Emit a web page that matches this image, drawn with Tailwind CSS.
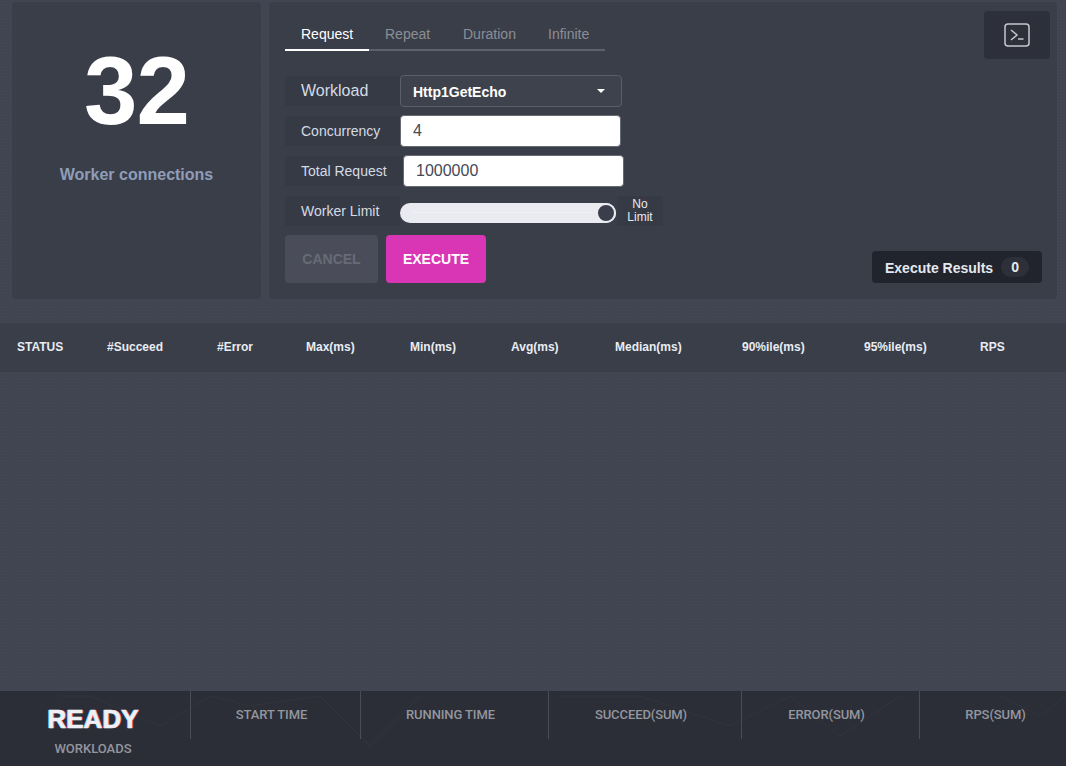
<!DOCTYPE html>
<html lang="en">
<head>
  <meta charset="UTF-8">
  <title>Workloads</title>
  <script src="https://cdn.jsdelivr.net/npm/@tailwindcss/browser@4"></script>
</head>
<body class="bg-[#404551] text-white font-['Liberation_Sans',Arial,sans-serif] h-[766px] w-[1066px] overflow-hidden flex flex-col bg-[radial-gradient(#ffffff05_1px,transparent_1px)] bg-[size:3px_3px]">

  <!-- top panels -->
  <div class="flex gap-2 pl-3 pr-[9px] pt-[2px] h-[299px]">
    <div class="w-[249px] h-[297px] shrink-0 rounded bg-[#3a3e49] flex flex-col items-center">
      <div class="text-8xl font-bold leading-none mt-[41px] tracking-[-1px]">32</div>
      <div class="mt-6 text-base font-bold text-[#8f9db8]">Worker connections</div>
    </div>

    <div class="relative flex-1 h-[297px] rounded bg-[#3a3e49] pl-4 pt-[14px]">
      <div class="flex w-[320px] h-[35px] border-b-2 border-[#5e616b] text-sm text-[#8b8e96]">
        <div class="w-[84px] h-[35px] pl-4 pt-2 text-white border-b-2 border-white">Request</div>
        <div class="w-[78px] pl-4 pt-2">Repeat</div>
        <div class="w-[85px] pl-4 pt-2">Duration</div>
        <div class="pl-4 pt-2">Infinite</div>
      </div>

      <div class="flex items-center mt-6 h-8">
        <div class="w-[115px] h-[30px] pl-4 bg-[#363a44] text-base leading-[30px] text-[#d5dbe6]">Workload</div>
        <div class="w-[222px] h-8 rounded border border-[#5b5f6b] bg-[#3e424d] flex items-center justify-between pl-3 pr-4 text-sm font-bold">
          <span class="pt-px">Http1GetEcho</span>
          <span class="w-0 h-0 border-x-[4px] border-x-transparent border-t-[4px] border-t-white"></span>
        </div>
      </div>

      <div class="flex items-center mt-2 h-8">
        <div class="w-[115px] h-[30px] pl-4 bg-[#363a44] text-sm leading-[30px] text-[#d5dbe6]">Concurrency</div>
        <div class="w-[221px] h-8 rounded-sm border border-[#666a75] bg-white pl-3 text-base leading-[30px] text-[#444857]">4</div>
      </div>

      <div class="flex items-center mt-2 h-8">
        <div class="w-[118px] h-[30px] pl-4 bg-[#363a44] text-sm leading-[30px] text-[#d5dbe6]">Total Request</div>
        <div class="w-[221px] h-8 rounded-sm border border-[#666a75] bg-white pl-3 text-base leading-[30px] text-[#444857]">1000000</div>
      </div>

      <div class="flex items-center mt-2 h-8">
        <div class="w-[115px] h-[30px] pl-4 bg-[#363a44] text-sm leading-[30px] text-[#d5dbe6]">Worker Limit</div>
        <div class="relative w-[216px] h-5 rounded-full bg-[#e9ebf0] mt-1">
          <div class="absolute left-3 right-4 top-[9px] border-t border-dotted border-[#f4f5f3]"></div>
          <div class="absolute right-0 top-0 w-5 h-5 rounded-full bg-[#3a3e4a] border-2 border-[#e9ebf0]"></div>
        </div>
        <div class="w-[46px] h-[30px] ml-px bg-[#363a44] text-xs leading-[13px] text-center text-[#e6e9ef] pt-[2px]">No<br>Limit</div>
      </div>

      <div class="flex gap-2 mt-2">
        <div class="w-[93px] h-12 rounded-sm bg-[#4a4d59] text-sm font-bold text-[#686b76] flex items-center justify-center">CANCEL</div>
        <div class="w-[100px] h-12 rounded-sm bg-[#d936b5] text-sm font-bold flex items-center justify-center">EXECUTE</div>
      </div>

      <div class="absolute top-[9px] right-[7px] w-[66px] h-12 rounded bg-[#2d2f3a] flex items-center justify-center">
        <svg width="26" height="24" viewBox="0 0 26 24" fill="none" stroke="#c5c7cd" stroke-width="1.5">
          <rect x="1" y="1" width="24" height="22" rx="3"/>
          <path d="M7 7l6 5-6 5M14 16h5.500"/>
        </svg>
      </div>

      <div class="absolute top-[249px] right-[15px] w-[170px] h-8 rounded bg-[#22242d] flex items-center pl-[13px] pt-px text-sm font-bold text-[#e4e8ef]">
        <span>Execute Results</span>
        <span class="ml-2 w-7 h-5 rounded-full bg-[#2d2f39] text-center text-sm leading-5 -mt-px">0</span>
      </div>
    </div>
  </div>

  <!-- results table header -->
  <div class="mt-6 h-[49px] pb-[2px] bg-[#3a3e49] grid grid-cols-[90px_110px_89px_104px_101px_104px_127px_122px_116px_1fr] items-center pl-[17px] text-xs font-bold text-[#e8ecf3]">
    <div>STATUS</div>
    <div>#Succeed</div>
    <div>#Error</div>
    <div>Max(ms)</div>
    <div>Min(ms)</div>
    <div>Avg(ms)</div>
    <div>Median(ms)</div>
    <div>90%ile(ms)</div>
    <div>95%ile(ms)</div>
    <div>RPS</div>
  </div>

  <div class="flex-1"></div>

  <!-- status footer -->
  <div class="relative h-[75px] bg-[#2b2e37] flex font-['Roboto',sans-serif] font-medium text-[13px] tracking-[-0.1px] text-[#94969e]">
    <svg class="absolute inset-0" width="1066" height="75" fill="none" stroke="#31343d" stroke-width="1">
      <path d="M60 5h30l70 30 50-30 40 10 70-10 50 50 50-50M560 5h80l90 30 60-30 50 40 60-40M1000 5l40 20 26-20"/>
    </svg>
    <div class="relative w-[190px] h-[75px] pr-1 text-center">
      <div class="font-['Liberation_Sans',Arial,sans-serif] text-[26px] font-bold leading-none tracking-normal text-[#eef0f5] mt-[15px] [-webkit-text-stroke:0.6px_#eef0f5] [text-shadow:1px_0_0_#e0364a,-1px_0_0_#4fb4e0]">READY</div>
      <div class="mt-2 tracking-normal leading-[18px]">WORKLOADS</div>
    </div>
    <div class="relative w-[170px] h-12 border-l border-[#4a4c56] text-center pr-2 pt-[14px]">START TIME</div>
    <div class="relative w-[188px] h-12 border-l border-[#4a4c56] text-center pr-2 pt-[14px]">RUNNING TIME</div>
    <div class="relative w-[193px] h-12 border-l border-[#4a4c56] text-center pr-2 pt-[14px]">SUCCEED(SUM)</div>
    <div class="relative w-[178px] h-12 border-l border-[#4a4c56] text-center pr-2 pt-[14px]">ERROR(SUM)</div>
    <div class="relative flex-1 h-12 border-l border-[#4a4c56] text-center pl-[5px] pt-[14px]">RPS(SUM)</div>
  </div>
</body>
</html>
